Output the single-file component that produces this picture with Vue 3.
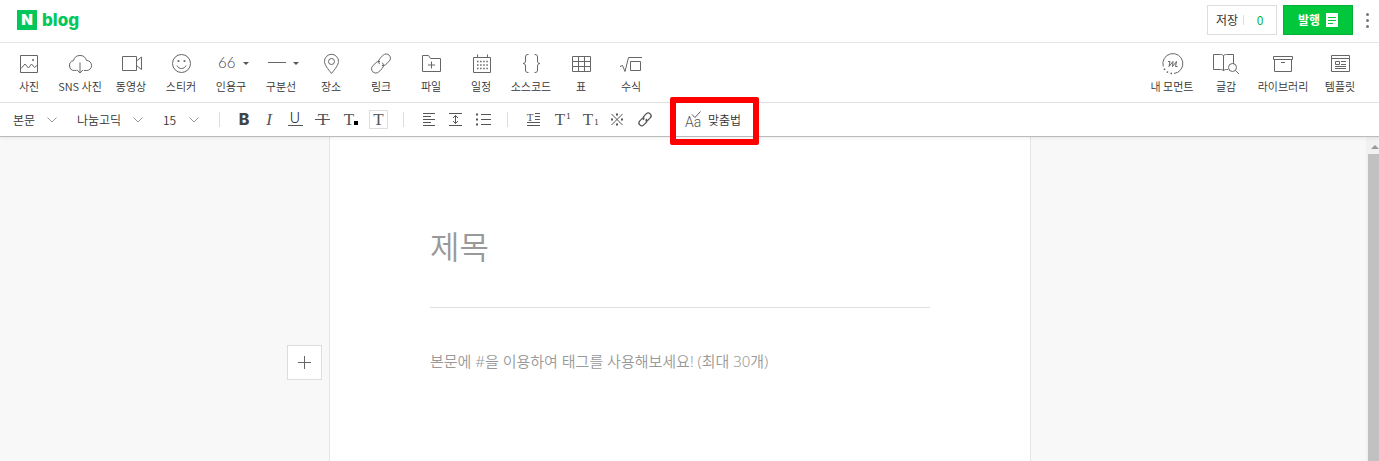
<template>
    <div class="blog-editor">
        <header class="top-bar">
            <a class="logo" href="#" aria-label="N blog">
                <span class="logo-mark">N</span>
                <span class="logo-text">blog</span>
            </a>
            <div class="top-actions">
                <button type="button" class="save-btn">
                    <span>저장</span>
                    <span class="save-count">0</span>
                </button>
                <button type="button" class="publish-btn">
                    <span>발행</span>
                    <svg viewBox="0 0 12 14" class="publish-icon">
                        <path d="M0 0h12v14H0z" fill="#fff" />
                        <path d="M2 4.5h8M2 7.5h8M2 10.5h5" stroke="#00c73c" />
                    </svg>
                </button>
                <button type="button" class="more-btn" aria-label="더보기">
                    <i></i><i></i><i></i>
                </button>
            </div>
        </header>

        <nav class="tool-bar">
            <div class="tool-list">
                <button v-for="tool in tools" :key="tool.name" type="button" class="tool">
                    <svg viewBox="-8 0 44 24" class="tool-icon" v-html="tool.icon"></svg>
                    <span class="tool-name">{{ tool.name }}</span>
                </button>
            </div>
            <div class="tool-list side">
                <button v-for="tool in sideTools" :key="tool.name" type="button" class="tool"
                    :class="{ wide: tool.wide }">
                    <svg viewBox="-8 0 44 24" class="tool-icon" v-html="tool.icon"></svg>
                    <span class="tool-name">{{ tool.name }}</span>
                </button>
            </div>
        </nav>

        <div class="format-bar">
            <div v-for="item in selects" :key="item.label" class="select-box" :class="item.size">
                <select v-model="item.value" :aria-label="item.label">
                    <option>{{ item.value }}</option>
                </select>
                <svg viewBox="0 0 10 6" class="chevron">
                    <path d="M.5 .5 5 5 9.5 .5" />
                </svg>
            </div>

            <template v-for="(group, index) in formats" :key="index">
                <span class="divider"></span>
                <button v-for="format in group" :key="format.name" type="button" class="format"
                    :aria-label="format.name">
                    <svg viewBox="0 0 27 33" class="format-icon" v-html="format.icon"></svg>
                </button>
            </template>

            <button type="button" class="spell-btn">
                <svg viewBox="0 0 18 18" class="spell-icon">
                    <text x="0" y="16" font-family="Roboto" font-size="14" fill="#555">Aa</text>
                    <path d="M7 3.5 10 6.500 15.500 .5" />
                </svg>
                <span>맞춤법</span>
                <span class="highlight"></span>
            </button>
        </div>

        <main class="workspace">
            <div class="canvas">
                <article class="paper">
                    <input v-model="title" class="title-input" type="text" placeholder="제목" aria-label="제목" />
                    <textarea v-model="body" class="body-input" rows="2" aria-label="본문"
                        placeholder="본문에 #을 이용하여 태그를 사용해보세요! (최대 30개)"></textarea>
                    <button type="button" class="add-btn" aria-label="추가">
                        <svg viewBox="0 0 13 13">
                            <path d="M6.500 0v13M0 6.500h13" />
                        </svg>
                    </button>
                </article>
            </div>
            <div class="scroll-track">
                <span class="scroll-arrow"></span>
                <span class="scroll-thumb"></span>
            </div>
        </main>
    </div>
</template>

<script setup>
import { ref } from 'vue';

const title = ref('');
const body = ref('');

const selects = ref([
    { label: '문단 서식', value: '본문', size: 'small' },
    { label: '글꼴', value: '나눔고딕', size: 'large' },
    { label: '글자 크기', value: '15', size: 'tiny' },
]);

// 드롭다운이 있는 도구의 작은 화살표
const caret = '<path d="M26 10h6l-3 3z" fill="#555" stroke="none"/>';

const tools = [
    { name: '사진', icon: '<path d="M5.500 3.500h17v17h-17zM6 16.500l4-4.500 3.500 4 3-4 3 3.500 3-2.500"/><circle cx="18" cy="8" r="1" fill="#666" stroke="none"/>' },
    { name: 'SNS 사진', icon: '<path d="M10.500 18.500H8.500a5 5 0 0 1-1-9.900A6.700 6.700 0 0 1 20.500 8.500a5 5 0 0 1 .2 10H18M14 10.500v10.500M11 17.800l3 3.200 3-3.200"/>' },
    { name: '동영상', icon: '<path d="M5.500 4.500h14v14h-14zM19.500 9l5-4v12.500l-5-4"/>' },
    { name: '스티커', icon: '<circle cx="14.500" cy="11.500" r="9"/><path d="M10 13.500c1.500 4 7.500 4 9 0"/><circle cx="11.500" cy="9" r="1.100" fill="#666" stroke="none"/><circle cx="17.500" cy="9" r="1.100" fill="#666" stroke="none"/>' },
    { name: '인용구', icon: '<text x="1" y="16" font-family="Lato" font-size="15" fill="#444" stroke="none">66</text>' + caret },
    { name: '구분선', icon: '<path d="M1 10.500h18"/>' + caret },
    { name: '장소', icon: '<path d="M14.500 21.500C11 17 7.500 13 7.500 9.300a7 7 0 0 1 14 0c0 3.700-3.500 7.700-7 12.200z"/><circle cx="14.500" cy="9.500" r="3"/>' },
    { name: '링크', icon: '<path d="M12.500 12.200a4.200 4.200 0 0 1 .3-5.700l3.400-3.300a4.200 4.200 0 0 1 6 6l-3.400 3.300a4.200 4.200 0 0 1-3.800 1M15.500 10.800a4.200 4.200 0 0 1-.3 5.700l-3.400 3.300a4.200 4.200 0 0 1-6-6l3.400-3.300a4.200 4.200 0 0 1 3.800-1"/>' },
    { name: '파일', icon: '<path d="M5.500 19.500v-16h6l2 3h10v13zM14.500 9.500v7M11 13h7"/>' },
    { name: '일정', icon: '<path d="M6.500 5.500h17v15h-17zM10.500 2.500v3M20.500 2.500v3"/><path d="M10 9.500h11M10 13h11M10 16.500h11" stroke-width="1.500" stroke-dasharray="1.500 1.600"/>' },
    { name: '소스코드', icon: '<path d="M11.500 2.500c-2.500 0-3 .8-3 2.500v4c0 1.500-.8 2.500-2.500 2.500 1.700 0 2.500 1 2.500 2.500v4c0 1.700.5 2.500 3 2.500M17.500 2.500c2.500 0 3 .8 3 2.500v4c0 1.500.8 2.500 2.500 2.500-1.700 0-2.500 1-2.500 2.500v4c0 1.700-.5 2.500-3 2.500"/>' },
    { name: '표', icon: '<path d="M5.500 4.500h18v15h-18zM5.500 9.500h18M5.500 14.500h18M11.500 4.500v15M17.500 4.500v15"/>' },
    { name: '수식', icon: '<path d="M3 14.500l2.500-1 2.500 6 3.500-14H25M13.500 9.500h10v9h-10z"/>' },
];

const sideTools = [
    { name: '내 모먼트', icon: '<path d="M5.300 14.500A10 10 0 1 1 16 21.500"/><path d="M14 21.500A10 10 0 0 1 5.500 15.500" stroke-width="1.500" stroke-dasharray="1.500 2.500"/><path d="M10 9.500h2l-1 5 4-5-.5 5 4-5-1 5h2" stroke-linejoin="round"/>' },
    { name: '글감', icon: '<path d="M16 17.500h-1.500c-1.500 0-3 .5-3 1.500 0-1-1.500-1.500-3-1.500h-7v-15h7c1.500 0 3 .5 3 1.500 0-1 1.500-1.500 3-1.500h7V12M11.500 4v15"/><circle cx="20.500" cy="15.500" r="4"/><path d="M23.500 18.500l3.500 3.500"/>' },
    { name: '라이브러리', wide: true, icon: '<path d="M4.500 4.500h19v3h-19zM5.500 7.500v12h17v-12M12 10.500h4"/>' },
    { name: '템플릿', icon: '<path d="M5.500 3.500h18v16h-18zM5.500 6.500h18M9.500 9.500h4v3h-4zM15 9.500h5M15 12.500h5M9 14.500h11M9 16.500h11"/>' },
];

// 서식 아이콘에서 쓰는 T 글자
const letterT = (x, y, size = 17) =>
    `<text x="${x}" y="${y}" text-anchor="middle" font-family="Liberation Serif" font-size="${size}" fill="#555" stroke="none">T</text>`;

const formats = [
    [
        { name: '굵게', icon: '<text x="14" y="22" text-anchor="middle" font-family="Inter" font-weight="800" font-size="16" fill="#444" stroke="none">B</text>' },
        { name: '기울임', icon: '<text x="12" y="22" text-anchor="middle" font-family="Liberation Serif" font-style="italic" font-size="17" fill="#555" stroke="none">I</text>' },
        { name: '밑줄', icon: '<text x="11" y="20" text-anchor="middle" font-family="Inter" font-weight="300" font-size="14" fill="#333" stroke="none">U</text><path d="M4 22.500h15"/>' },
        { name: '취소선', icon: letterT(12, 22) + '<path d="M4 16.500h15"/>' },
        { name: '글자색', icon: letterT(11, 22) + '<path d="M16 18h4v4h-4z" fill="#000" stroke="none"/>' },
        { name: '글자 배경색', icon: '<path d="M4.500 7.500h18v18h-18z" stroke="#ddd"/>' + letterT(13.5, 22) },
    ],
    [
        { name: '정렬', icon: '<path d="M8 10.500h12M8 13.500h8M8 16.500h12M8 19.500h8M8 22.500h12"/>' },
        { name: '줄 간격', icon: '<path d="M7 10.500h13M7 22.500h13M13.500 12.500v8M11 15l2.500-2.500L16 15M11 18l2.500 2.500L16 18"/>' },
        { name: '목록', icon: '<path d="M12 11.500h10M12 16.500h10M12 21.500h10"/><path d="M7 11.500h2M7 16.500h2M7 21.500h2" stroke-width="2"/>' },
    ],
    [
        { name: '글머리', icon: letterT(11, 18, 11) + '<path d="M16 10.500h5M16 13.500h5M16 16.500h5M8 19.500h13M8 22.500h13"/>' },
        { name: '위 첨자', icon: letterT(13, 22) + '<text x="19" y="16" font-family="DejaVu Serif" font-size="8" fill="#444" stroke="none">1</text>' },
        { name: '아래 첨자', icon: letterT(13, 22) + '<text x="19" y="22" font-family="DejaVu Serif" font-size="8" fill="#444" stroke="none">1</text>' },
        { name: '특수문자', icon: '<path d="M8.500 11l11 11M19.500 11l-11 11"/><path d="M13 11.500h2M13 21.500h2M8 16.500h2M18 16.500h2" stroke-width="2"/>' },
        { name: '링크 걸기', icon: '<path d="M13 16.800a2.800 2.800 0 0 1 .2-3.900l2-2a2.800 2.800 0 0 1 4 4l-2 2a2.800 2.800 0 0 1-2.700.6M15 16a2.800 2.800 0 0 1-.2 3.900l-2 2a2.800 2.800 0 0 1-4-4l2-2a2.800 2.800 0 0 1 2.700-.6" stroke-width="1.300"/>' },
    ],
];
</script>

<style>
body {
    margin: 0;
    background: #fff;
}
</style>

<style scoped>
.blog-editor {
    display: flex;
    flex-direction: column;
    min-height: 100vh;
    font-family: 'Noto Sans CJK KR', sans-serif;
    font-weight: 350;
    color: #333;
}

button,
select,
input,
textarea {
    margin: 0;
    padding: 0;
    border: 0;
    border-radius: 0;
    background: none;
    font: inherit;
    color: inherit;
    box-sizing: border-box;
}

button {
    cursor: pointer;
}

svg {
    display: block;
    fill: none;
    flex-shrink: 0;
}

/* 상단 바 */
.top-bar {
    display: flex;
    justify-content: space-between;
    height: 42px;
    padding: 0 6px 0 17px;
    border-bottom: 1px solid #e5e5e5;
}

.logo {
    display: flex;
    align-items: center;
    gap: 5px;
    height: 40px;
    color: #03c75a;
    text-decoration: none;
}

.logo-mark {
    width: 20px;
    height: 20px;
    background: #03c75a;
    color: #fff;
    font: 900 15px/20px Inter, sans-serif;
    text-align: center;
}

.logo-text {
    font: 800 17px/20px Inter, sans-serif;
}

.top-actions {
    display: flex;
    align-items: flex-start;
    gap: 6px;
    padding-top: 5px;
}

.save-btn,
.publish-btn {
    display: flex;
    align-items: center;
    justify-content: center;
    width: 70px;
    height: 30px;
    font-size: 12px;
    line-height: 16px;
}

.save-btn {
    justify-content: flex-end;
    border: 1px solid #ddd;
    font-weight: 400;
}

.save-count {
    width: 32px;
    margin-left: 5px;
    border-left: 1px solid #ddd;
    line-height: 10px;
    text-align: center;
    color: #00b843;
}

.publish-btn {
    gap: 6px;
    border: 1px solid #00b136;
    background: #00c73c;
    color: #fff;
    font-weight: 700;
}

.publish-icon {
    width: 12px;
    height: 14px;
}

.more-btn {
    display: flex;
    flex-direction: column;
    align-items: center;
    justify-content: center;
    gap: 3px;
    width: 12px;
    height: 30px;
    margin-left: 2px;
}

.more-btn i {
    width: 3px;
    height: 3px;
    border-radius: 2px;
    background: #777;
}

/* 도구 모음 */
.tool-bar {
    display: flex;
    justify-content: space-between;
    padding: 0 12px 0 4px;
    border-bottom: 1px solid #e5e5e5;
}

.tool-list {
    display: flex;
}

.tool {
    display: flex;
    flex-direction: column;
    align-items: center;
    width: 50px;
    padding: 9px 0 8px;
    white-space: nowrap;
}

.tool:nth-child(2) {
    width: 52px;
}

.side .tool {
    width: 54px;
}

.side .tool.wide {
    width: 60px;
}

.tool-icon {
    width: 44px;
    height: 24px;
    stroke: #666;
}

.tool-name {
    margin-top: 2px;
    font-size: 11px;
    line-height: 16px;
}

/* 서식 모음 */
.format-bar {
    position: relative;
    z-index: 1;
    display: flex;
    align-items: center;
    height: 33px;
    padding-left: 13px;
    border-bottom: 1px solid #bbb;
    box-shadow: 0 1px 3px rgba(0, 0, 0, 0.08);
    font-size: 12px;
}

.select-box {
    display: grid;
    align-items: center;
    margin-right: 20px;
}

.select-box.small {
    width: 44px;
}

.select-box.large {
    width: 66px;
}

.select-box.tiny {
    width: 36px;
}

.select-box select {
    grid-area: 1 / 1;
    width: 100%;
    height: 24px;
    appearance: none;
    outline: none;
}

.chevron {
    grid-area: 1 / 1;
    justify-self: end;
    width: 10px;
    height: 6px;
    stroke: #999;
    pointer-events: none;
}

.divider {
    width: 1px;
    height: 15px;
    margin: 0 11px;
    background: #ddd;
}

.select-box + .divider {
    margin: 0 10px 0 0;
}

.format {
    width: 27px;
    height: 33px;
}

.divider:nth-last-of-type(1) ~ .format {
    width: 28px;
}

.format-icon {
    width: 27px;
    height: 33px;
    stroke: #555;
}

.spell-btn {
    position: relative;
    display: flex;
    align-items: center;
    gap: 5px;
    height: 33px;
    margin-left: 17px;
    padding: 0 12px 0 9px;
}

.spell-icon {
    width: 18px;
    height: 18px;
    stroke: #555;
}

.spell-icon text {
    stroke: none;
}

.highlight {
    position: absolute;
    top: -6px;
    right: -6px;
    bottom: -9px;
    left: -6px;
    border: 6px solid #fe0000;
    border-radius: 2px;
}

/* 편집 영역 */
.workspace {
    display: flex;
    flex: 1;
    background: #f8f8f8;
}

.canvas {
    display: flex;
    flex: 1;
    justify-content: center;
    padding-right: 6px;
}

.paper {
    position: relative;
    box-sizing: border-box;
    width: 100%;
    max-width: 702px;
    padding: 70px 100px 0;
    border: solid #e5e5e5;
    border-width: 0 1px;
    background: #fff;
}

.title-input {
    display: block;
    width: 100%;
    height: 101px;
    padding-bottom: 24px;
    border-bottom: 1px solid #e0e0e0;
    font-size: 32px;
    outline: none;
}

.body-input {
    display: block;
    width: 100%;
    margin-top: 41px;
    font-family: 'Noto Sans', 'Noto Sans CJK KR', sans-serif;
    font-size: 15px;
    line-height: 24px;
    resize: none;
    outline: none;
}

.title-input::placeholder,
.body-input::placeholder {
    color: #999;
    opacity: 1;
}

.add-btn {
    position: absolute;
    top: 208px;
    left: -43px;
    display: grid;
    place-items: center;
    width: 35px;
    height: 35px;
    border: 1px solid #ddd;
    background: #fff;
}

.add-btn svg {
    width: 13px;
    height: 13px;
    stroke: #666;
}

.scroll-track {
    display: flex;
    flex-direction: column;
    width: 13px;
    background: #f1f1f1;
}

.scroll-arrow {
    width: 0;
    margin: 8px 0 5px 5px;
    border: 4px solid transparent;
    border-top: 0;
    border-bottom-color: #999;
}

.scroll-thumb {
    flex: 1;
    margin-left: 2px;
    background: #c1c1c1;
}
</style>
